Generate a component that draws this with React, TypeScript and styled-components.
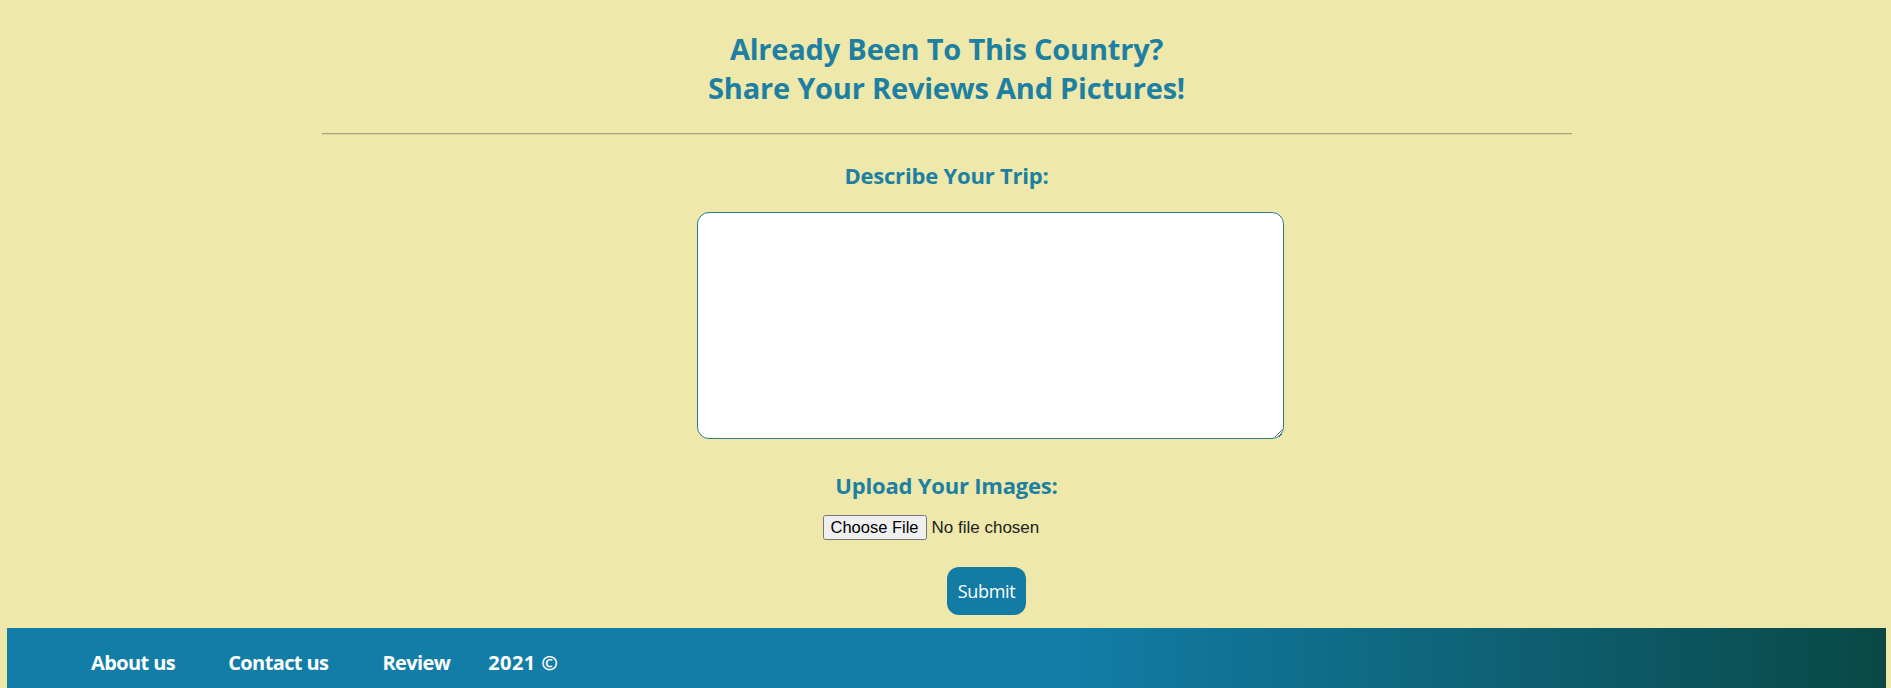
import React from "react";
import styled, { createGlobalStyle } from "styled-components";

const GlobalStyle = createGlobalStyle`
  html, body {
    margin: 0;
    padding: 0;
    background: #eee8aa;
  }
  body {
    font-family: "Segoe UI", "Open Sans", "Noto Sans", sans-serif;
  }
`;

const Page = styled.div`
  display: flex;
  flex-direction: column;
  padding: 0 5px 0 7px;
  min-height: 688px;
  box-sizing: border-box;
`;

const Header = styled.header`
  display: flex;
  flex-direction: column;
  align-items: center;
  padding-top: 30px;
`;

const Title = styled.h2`
  margin: 0;
  font-size: 29px;
  line-height: 38.5px;
  font-weight: 700;
  color: #1d7fa2;
  text-align: center;
  letter-spacing: -0.2px;
`;

const Rule = styled.hr`
  width: 1250px;
  margin: 26px auto 0;
  border: 0;
  border-top: 1px solid #a4a48c;
  border-bottom: 1px solid #d9d49a;
`;

const Form = styled.form`
  display: flex;
  flex-direction: column;
  align-items: center;
`;

const Label = styled.label<{ $top: number }>`
  margin-top: ${(p) => p.$top}px;
  font-size: 22px;
  line-height: 28px;
  font-weight: 700;
  color: #1d7fa2;
  letter-spacing: -0.2px;
`;

const TripText = styled.textarea`
  display: block;
  width: 587px;
  height: 227px;
  margin: 23px 0 0 88px;
  box-sizing: border-box;
  background: #ffffff;
  border: 1px solid #2a7a8a;
  border-radius: 12px;
  resize: both;
  outline: none;
`;

const FileInput = styled.input`
  margin-top: 16px;
  width: 248px;
  font-family: "Liberation Sans", Arial, sans-serif;
  font-size: 17px;
  color: #222;

  &::file-selector-button {
    font-family: "Liberation Sans", Arial, sans-serif;
    font-size: 16.5px;
    margin-right: 5px;
  }
`;

const SubmitButton = styled.button`
  margin: 27px 0 0 80px;
  width: 79px;
  height: 48px;
  border: 0;
  border-radius: 12px;
  background: #137ca4;
  color: #ffffff;
  font-family: "Segoe UI", "Open Sans", "Noto Sans", sans-serif;
  font-size: 18px;
  letter-spacing: -0.3px;
  cursor: pointer;
`;

const Footer = styled.footer`
  margin-top: 13px;
  height: 80px;
  background: linear-gradient(to right, #127ea8 0%, #127ea8 56%, #0a4846 100%);
  display: flex;
  align-items: flex-start;
  padding: 22px 0 0 84px;
  box-sizing: border-box;
`;

const FooterLink = styled.a<{ $gap: number; $spacing?: number }>`
  margin-left: ${(p) => p.$gap}px;
  color: #ffffff;
  font-size: 20px;
  line-height: 26px;
  font-weight: 700;
  text-decoration: none;
  letter-spacing: ${(p) => p.$spacing ?? -0.6}px;
`;

export default function App() {
  return (
    <>
      <GlobalStyle />
      <Page>
        <Header>
          <Title>
            Already Been To This Country?
            <br />
            Share Your Reviews And Pictures!
          </Title>
        </Header>
        <Rule />
        <Form onSubmit={(e) => e.preventDefault()}>
          <Label $top={26} htmlFor="trip">
            Describe Your Trip:
          </Label>
          <TripText id="trip" />
          <Label $top={32} htmlFor="images">
            Upload Your Images:
          </Label>
          <FileInput id="images" type="file" />
          <SubmitButton type="submit">Submit</SubmitButton>
        </Form>
        <Footer>
          <FooterLink $gap={0} href="#">About us</FooterLink>
          <FooterLink $gap={53} href="#">Contact us</FooterLink>
          <FooterLink $gap={54} href="#">Review</FooterLink>
          <FooterLink $gap={38} $spacing={0.4} href="#">2021 ©</FooterLink>
        </Footer>
      </Page>
    </>
  );
}
